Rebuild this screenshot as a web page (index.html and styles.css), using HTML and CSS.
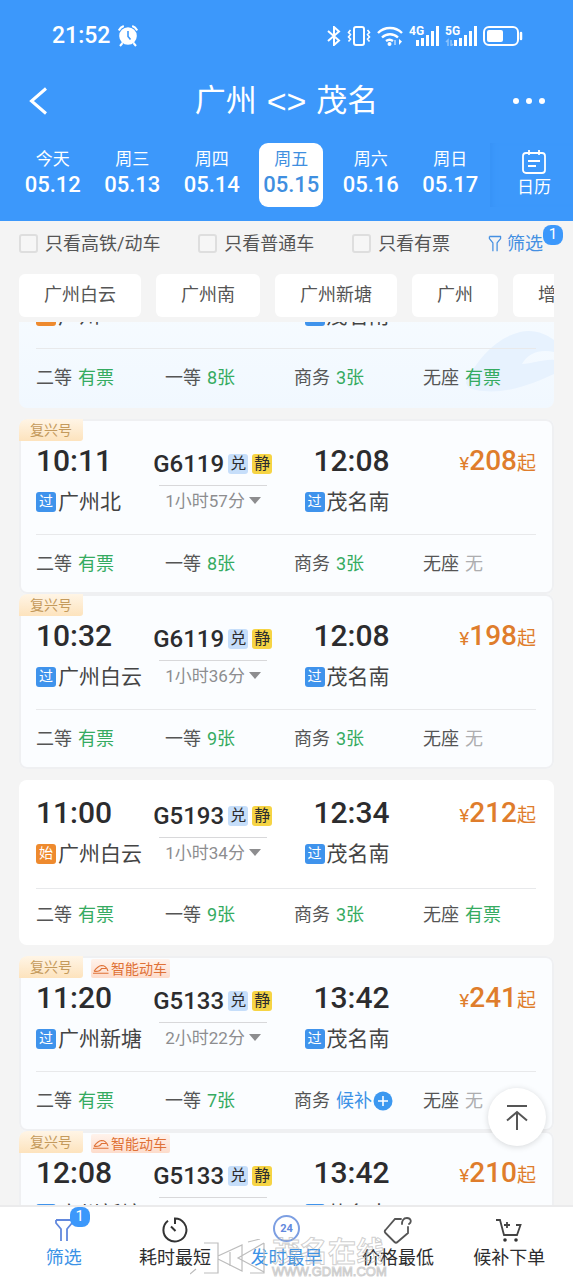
FILE: index.html
```html
<!DOCTYPE html>
<html lang="zh-CN">
<head>
<meta charset="utf-8">
<meta name="viewport" content="width=device-width, initial-scale=1">
<title>广州 - 茂名 车票</title>
<link rel="stylesheet" href="styles.css">
</head>
<body>
<svg class="defs" aria-hidden="true">
  <symbol id="funnel" viewBox="0 0 20 24"><path d="M2 2h16v3l-5 6v12M2 2v3l5 6v12" fill="none" stroke="currentColor" stroke-width="1.800" stroke-linejoin="round"/></symbol>
  <symbol id="caret" viewBox="0 0 12 8"><path d="M0 0h12L6 7z" fill="currentColor"/></symbol>
  <symbol id="train" viewBox="0 0 16 10"><path d="M0 9.300h15.500M1 7.300C3 4.500 5 2 8.500 1.500 12 1.500 14 4 15 7M1 7.300c4 .4 6.500-.3 7.500-2.800h4.500" fill="none" stroke="currentColor" stroke-width="1.100"/></symbol>
</svg>

<header class="top">
  <div class="status">
    <span class="clock">21:52</span>
    <svg width="20" height="22" viewBox="0 0 20 22"><circle cx="10" cy="11" r="8.800" fill="#fff"/><path d="M.8 5.500a9 9 0 0 1 5-4.500M19.200 5.500a9 9 0 0 0-5-4.500M4.500 18 2 21M15.500 18l2.500 3" stroke="#fff" stroke-width="2" fill="none"/><path d="M10 6v5.500l2.500 3" stroke="#3c98fb" stroke-width="1.600" fill="none"/></svg>
    <div class="signals">
      <svg width="14" height="20" viewBox="0 0 14 20"><path d="M1 5l11 9.500L7 19V1l5 4.500L1 15" fill="none" stroke="#fff" stroke-width="2"/></svg>
      <svg width="24" height="20" viewBox="0 0 24 20"><rect x="7" y="1" width="10" height="18" rx="2" fill="none" stroke="#fff" stroke-width="2"/><path d="M3.500 4 1.500 6.500l2 2-2 2.500 2 2-2 2.500M20.500 4l2 2.500-2 2 2 2.500-2 2 2 2.500" fill="none" stroke="#fff" stroke-width="1.600"/></svg>
      <svg width="26" height="20" viewBox="0 0 26 20"><path d="M1 7a17 17 0 0 1 24 0M5 11.500a11.500 11.500 0 0 1 16 0M9 15a6 6 0 0 1 7 0" fill="none" stroke="#fff" stroke-width="2.400"/><circle cx="12.500" cy="18" r="2" fill="#fff"/><path d="M18 14v5" stroke="#9bcafd" stroke-width="2"/><path d="M22 13v6l3-3.500" fill="#fff"/></svg>
      <span class="cell"><b>4G</b><svg width="24" height="20" viewBox="0 0 24 20"><path d="M2.500 14v6M7.500 12v8M12.500 9v11M17.500 5v15M22.500 0v20" stroke="#fff" stroke-width="3"/></svg></span>
      <span class="cell"><b>5G</b><svg width="32" height="20" viewBox="0 0 32 20"><path d="M1 16l2-2v6M8 18l-2 2v-6" stroke="#8cc3fd" stroke-width="1.500" fill="none"/><path d="M10.500 14v6M15.500 12v8M20.500 9v11M25.500 5v15M30.500 0v20" stroke="#fff" stroke-width="3"/></svg></span>
      <svg width="40" height="20" viewBox="0 0 40 20"><rect x="1" y="1" width="34" height="18" rx="5" fill="none" stroke="#fff" stroke-width="2"/><rect x="4" y="4" width="16" height="12" rx="2" fill="#fff"/><path d="M38 7v6" stroke="#fff" stroke-width="2.500" stroke-linecap="round"/></svg>
    </div>
  </div>
  <div class="titlebar">
    <button class="plain" aria-label="返回"><svg width="20" height="28" viewBox="0 0 20 28"><path d="M18 1.500 3.500 14 18 26.500" fill="none" stroke="#fff" stroke-width="3"/></svg></button>
    <h1><span>广州</span><span class="swap">&lt;&gt;</span><span>茂名</span></h1>
    <button class="plain" aria-label="更多"><svg width="34" height="8" viewBox="0 0 34 8"><g fill="#fff"><circle cx="5" cy="4" r="3"/><circle cx="18" cy="4" r="3"/><circle cx="31" cy="4" r="3"/></g></svg></button>
  </div>
  <div class="dates">
    <div class="days">
      <button class="day"><span>今天</span><b>05.12</b></button>
      <button class="day"><span>周三</span><b>05.13</b></button>
      <button class="day"><span>周四</span><b>05.14</b></button>
      <button class="day on"><span>周五</span><b>05.15</b></button>
      <button class="day"><span>周六</span><b>05.16</b></button>
      <button class="day"><span>周日</span><b>05.17</b></button>
    </div>
    <button class="calendar">
      <svg width="24" height="24" viewBox="0 0 24 24"><rect x="1" y="3" width="22" height="20" rx="3" fill="none" stroke="#fff" stroke-width="1.800"/><path d="M7 0v5M17 0v5M6 11h12M6 16h8" stroke="#fff" stroke-width="1.800"/></svg>
      <span>日历</span>
    </button>
  </div>
</header>

<section class="filters">
  <label class="check"><input type="checkbox">只看高铁/动车</label>
  <label class="check"><input type="checkbox">只看普通车</label>
  <label class="check"><input type="checkbox">只看有票</label>
  <button class="plain filter"><svg width="14" height="17"><use href="#funnel"/></svg>筛选<i class="count">1</i></button>
</section>
<nav class="chips">
  <button>广州白云</button><button>广州南</button><button>广州新塘</button><button>广州</button><button>增城</button>
</nav>

<main class="list">
  <article class="card rail first">
    <svg class="bullet" width="88" height="64" viewBox="0 0 88 64"><path d="M0 52C12 28 30 8 54 2c14-3 26 2 34 8v12c-14-3-26 1-32 12 10 0 22-5 32-4v14C70 52 40 66 10 60 4 59 0 56 0 52z" fill="#e7f2fe"/></svg>
    <div class="trip">
      <div class="stop"><time>09:56</time><p><i class="mark start">始</i>广州</p></div>
      <div class="run"><p class="no">G6117</p></div>
      <div class="last"><div class="stop end"><time>12:02</time><p><i class="mark">过</i>茂名南</p></div></div>
    </div>
    <ul class="seats"><li>二等 <em>有票</em></li><li>一等 <em>8张</em></li><li>商务 <em>3张</em></li><li>无座 <em>有票</em></li></ul>
  </article>

  <article class="card rail">
    <div class="tags"><span class="fx">复兴号</span></div>
    <div class="trip">
      <div class="stop"><time>10:11</time><p><i class="mark">过</i>广州北</p></div>
      <div class="run"><p class="no">G6119<i class="ex">兑</i><i class="quiet">静</i></p><hr><button class="dur">1小时57分<svg width="12" height="8"><use href="#caret"/></svg></button></div>
      <div class="last"><div class="stop end"><time>12:08</time><p><i class="mark">过</i>茂名南</p></div><p class="price"><small>¥</small>208<small>起</small></p></div>
    </div>
    <ul class="seats"><li>二等 <em>有票</em></li><li>一等 <em>8张</em></li><li>商务 <em>3张</em></li><li>无座 <em class="none">无</em></li></ul>
  </article>

  <article class="card rail">
    <div class="tags"><span class="fx">复兴号</span></div>
    <div class="trip">
      <div class="stop"><time>10:32</time><p><i class="mark">过</i>广州白云</p></div>
      <div class="run"><p class="no">G6119<i class="ex">兑</i><i class="quiet">静</i></p><hr><button class="dur">1小时36分<svg width="12" height="8"><use href="#caret"/></svg></button></div>
      <div class="last"><div class="stop end"><time>12:08</time><p><i class="mark">过</i>茂名南</p></div><p class="price"><small>¥</small>198<small>起</small></p></div>
    </div>
    <ul class="seats"><li>二等 <em>有票</em></li><li>一等 <em>9张</em></li><li>商务 <em>3张</em></li><li>无座 <em class="none">无</em></li></ul>
  </article>

  <article class="card">
    <div class="trip">
      <div class="stop"><time>11:00</time><p><i class="mark start">始</i>广州白云</p></div>
      <div class="run"><p class="no">G5193<i class="ex">兑</i><i class="quiet">静</i></p><hr><button class="dur">1小时34分<svg width="12" height="8"><use href="#caret"/></svg></button></div>
      <div class="last"><div class="stop end"><time>12:34</time><p><i class="mark">过</i>茂名南</p></div><p class="price"><small>¥</small>212<small>起</small></p></div>
    </div>
    <ul class="seats"><li>二等 <em>有票</em></li><li>一等 <em>9张</em></li><li>商务 <em>3张</em></li><li>无座 <em>有票</em></li></ul>
  </article>

  <article class="card rail">
    <div class="tags"><span class="fx">复兴号</span><span class="smart"><svg width="16" height="10"><use href="#train"/></svg>智能动车</span></div>
    <div class="trip">
      <div class="stop"><time>11:20</time><p><i class="mark">过</i>广州新塘</p></div>
      <div class="run"><p class="no">G5133<i class="ex">兑</i><i class="quiet">静</i></p><hr><button class="dur">2小时22分<svg width="12" height="8"><use href="#caret"/></svg></button></div>
      <div class="last"><div class="stop end"><time>13:42</time><p><i class="mark">过</i>茂名南</p></div><p class="price"><small>¥</small>241<small>起</small></p></div>
    </div>
    <ul class="seats"><li>二等 <em>有票</em></li><li>一等 <em>7张</em></li><li>商务 <em class="wait">候补</em><svg width="20" height="20" viewBox="0 0 20 20"><circle cx="10" cy="10" r="9.500" fill="#3c98f0"/><path d="M10 5v10M5 10h10" stroke="#fff" stroke-width="1.600"/></svg></li><li>无座 <em class="none">无</em></li></ul>
  </article>

  <article class="card rail">
    <div class="tags"><span class="fx">复兴号</span><span class="smart"><svg width="16" height="10"><use href="#train"/></svg>智能动车</span></div>
    <div class="trip">
      <div class="stop"><time>12:08</time><p><i class="mark">过</i>广州新塘</p></div>
      <div class="run"><p class="no">G5133<i class="ex">兑</i><i class="quiet">静</i></p><hr></div>
      <div class="last"><div class="stop end"><time>13:42</time><p><i class="mark">过</i>茂名南</p></div><p class="price"><small>¥</small>210<small>起</small></p></div>
    </div>
  </article>
  <button class="totop" aria-label="回到顶部"><svg width="24" height="26" viewBox="0 0 24 26"><path d="M2 2h20M12 26V8M2 16.500 12 8l10 8.500" fill="none" stroke="#555" stroke-width="2"/></svg></button>
</main>

<footer class="tabs">
  <button class="on"><span class="ic"><svg width="20" height="24"><use href="#funnel"/></svg><i class="count">1</i></span>筛选</button>
  <button><span class="ic"><svg width="26" height="26" viewBox="0 0 26 26"><path d="M13 7V1.500A11.500 11.500 0 1 1 6 3.800M9 9.500l4.500 4.500" fill="none" stroke="#333" stroke-width="2"/></svg></span>耗时最短</button>
  <button class="on"><span class="ic ring">24</span>发时最早</button>
  <button><span class="ic"><svg width="30" height="30" viewBox="0 0 30 30"><path d="M18 4h-6L2.500 15c-1 1-1 2 0 3l9 9c1 1 2 1 3 0L25 18v-6M19 9c0-3 1-6 5-6 4 0 5 4 2 6" fill="none" stroke="#555" stroke-width="1.800" stroke-linecap="round"/></svg></span>价格最低</button>
  <button><span class="ic"><svg width="26" height="24" viewBox="0 0 26 24"><path d="M0 2h4l4 15h13l3.500-10H20M8 7h6M11 4v6" fill="none" stroke="#444" stroke-width="1.800"/><circle cx="9" cy="22" r="1.800" fill="#333"/><circle cx="20" cy="22" r="1.800" fill="#333"/></svg></span>候补下单</button>
  <div class="wm">
    <svg width="80" height="40" viewBox="0 0 80 40"><path d="M0 35l6-5M14 4h14v30H14M28 17 52 6v26L28 20M40 13v14M74 4v30H60M74 4 48 19l26 14M58 3l12-3" fill="none" stroke="#bdbdbd" stroke-width="1.200"/></svg>
    <div><b>茂名在线</b><span>WWW.GDMM.COM</span></div>
  </div>
</footer>
</body>
</html>
```
FILE: styles.css
```css
* { box-sizing: border-box; margin: 0; padding: 0; }
body {
  display: flex; flex-direction: column; height: 100vh; overflow: hidden;
  background: #f4f4f4; color: #555;
  font: 18px/28px Roboto, "Noto Sans CJK SC", sans-serif;
}
button { font: inherit; color: inherit; border: 0; background: none; white-space: nowrap; }
i, em { font-style: normal; }
svg { display: block; flex: none; }
.defs { position: absolute; width: 0; height: 0; }
.plain { display: flex; align-items: center; }

.top { background: #3c98fb; color: #fff; padding-bottom: 14px; }
.status { display: flex; align-items: center; gap: 8px; height: 72px; padding: 0 50px 0 52px; }
.clock { font-size: 23px; font-weight: 500; }
.signals { display: flex; align-items: center; gap: 6px; margin-left: auto; }
.cell { display: flex; justify-content: flex-end; position: relative; width: 32px; }
.cell b { position: absolute; left: 0; top: -1px; font-size: 12px; line-height: 12px; font-weight: 700; }
.cell:nth-of-type(1) { width: 30px; }
.titlebar { display: flex; align-items: center; justify-content: space-between; height: 58px; padding: 0 28px; margin-bottom: 13px; }
.titlebar button { width: 34px; }
h1 { display: flex; gap: 10px; font-size: 31px; line-height: 44px; font-weight: 400; }
.swap { font-family: "Liberation Sans", sans-serif; font-size: 34px; }
.dates { display: flex; }
.days { flex: 1; display: grid; grid-template-columns: repeat(6, 1fr); justify-items: center; padding: 0 0 0 13px; }
.day { display: flex; flex-direction: column; align-items: center; width: 64px; height: 64px; padding-top: 5px; border-radius: 9px; font-size: 17px; line-height: 23px; }
.day b { font-size: 22px; line-height: 28px; font-weight: 500; }
.day.on { background: #fff; color: #3f8fe0; }
.calendar { display: flex; flex-direction: column; align-items: center; gap: 2px; width: 83px; padding: 7px 0 0 5px; font-size: 17px; line-height: 22px; box-shadow: inset 6px 0 6px -5px #3690f4; }

.filters { display: flex; align-items: center; justify-content: space-between; height: 45px; padding: 0 30px 0 19px; }
.check { display: flex; align-items: center; gap: 7px; white-space: nowrap; }
.check input { appearance: none; width: 19px; height: 19px; border: 2px solid #dedede; border-radius: 3px; background: #f6f6f6; }
.filter { gap: 5px; color: #4590e2; position: relative; }
.count { position: absolute; width: 20px; height: 20px; border-radius: 8px; background: #3c98fb; color: #fff; font-size: 15px; line-height: 19px; text-align: center; }
.filter .count { right: -20px; top: -5px; }
.chips { display: flex; gap: 15px; margin: 8px 19px 5px; overflow: hidden; flex: none; }
.chips button { flex: none; height: 43px; padding: 0 25px 2px; border-radius: 6px; background: #fff; }

.list { position: relative; flex: 1; min-height: 0; overflow: hidden; padding: 0 19px; }
.card { position: relative; margin-top: 11px; padding: 15px 0 16px; border-radius: 8px; background: #fff; overflow: hidden; }
.rail { padding: 0 0 16px; background: #fbfdff; box-shadow: inset 0 0 0 2px #eff0f2; }
.rail + .rail { margin-top: 0; }
.first + .rail { margin-top: 11px; }
/* the list is scrolled part of the way into its first card */
.rail.first { margin-top: -89px; padding-top: 24px; background: linear-gradient(#fafdff, #f1f8ff); box-shadow: none; }
.bullet { position: absolute; right: 0; bottom: 14px; }
.tags { display: flex; gap: 8px; height: 24px; font-size: 14px; }
.fx { height: 22px; padding: 0 11px; line-height: 22px; color: #c49a5c; background: linear-gradient(#fff5e6, #fde3bd); border-radius: 8px 0 3px 0; }
.smart { display: flex; align-items: center; gap: 2px; height: 19px; margin-top: 3px; padding: 0 3px 0 2px; line-height: 18px; color: #df7136; background: linear-gradient(#fff3ec, #fddccb); border-radius: 2px; }
.trip { position: relative; display: grid; grid-template-columns: 117fr 151fr 231fr; margin: 0 18px 20px 17px; }
.rail .trip { margin-bottom: 17px; }
.stop { display: flex; flex-direction: column; gap: 8px; }
.end { text-align: right; }
.card:not(.rail) .trip { margin-bottom: 19px; }
time { font-size: 30px; line-height: 36px; font-weight: 500; color: #2c2c2e; }
.stop p { display: flex; align-items: center; gap: 2px; font-size: 21px; line-height: 30px; color: #444; white-space: nowrap; }
.mark { width: 20px; height: 20px; border-radius: 3px; background: #3f93ec; color: #fff; font-size: 14px; line-height: 19px; text-align: center; }
.mark.start { background: #ee8a2e; }
.run { padding-top: 7px; }
.no { display: flex; align-items: center; font-size: 24px; line-height: 28px; font-weight: 500; color: #2c2c2e; }
.no i { width: 20px; height: 20px; margin-left: 4px; border-radius: 3px; font-size: 16px; line-height: 19px; font-weight: 400; text-align: center; }
.ex { background: #c6defa; }
.quiet { background: #f6d444; }
.run hr { width: 108px; height: 1px; margin: 7px 0 3px 6px; border: 0; background: #d8d8da; }
.dur { display: flex; align-items: center; gap: 4px; padding-left: 12px; font-size: 17px; line-height: 24px; color: #8d8d8f; }
.last { display: flex; justify-content: space-between; align-items: flex-start; }
.price { font-size: 28px; line-height: 36px; font-weight: 500; color: #df7d2c; white-space: nowrap; }
.price small { font-size: 19px; font-weight: 400; }
.seats { position: relative; display: grid; grid-template-columns: repeat(4, 1fr); list-style: none; margin-left: 17px; padding: 13px 2px 0 0; }
.rail .seats { padding-top: 16px; }
.seats::before { content: ""; position: absolute; top: 0; left: 0; right: 18px; height: 1px; background: #e8e9eb; }
.seats li { display: flex; align-items: center; white-space: nowrap; }
.seats em { margin-left: 6px; color: #35ab61; }
.seats .none { color: #adadaf; }
.seats .wait { color: #3c92e6; margin-right: 1px; }
.totop { position: absolute; right: 27px; bottom: 59px; display: grid; place-items: center; width: 58px; height: 58px; border-radius: 50%; background: #fff; box-shadow: 0 1px 6px rgba(0, 0, 0, .15); }

.tabs { position: relative; display: grid; grid-template-columns: repeat(5, 1fr); height: 75px; padding: 0 8px; background: #fff; border-top: 2px solid #ebebec; color: #2c2c2e; }
.tabs button { display: flex; flex-direction: column; align-items: center; padding-top: 7px; line-height: 26px; }
.tabs .on { color: #3c92e6; }
.tabs .ic { position: relative; display: grid; place-items: center; height: 31px; color: #6288dd; }
.tabs .count { left: 16px; top: -7px; }
.tabs .ring { width: 27px; height: 27px; margin: 1px 0 3px; border: 2px solid #7d9fe2; border-radius: 50%; font-size: 11px; line-height: 23px; font-weight: 700; }
.wm { position: absolute; left: 190px; bottom: 1px; display: flex; align-items: flex-end; gap: 2px; color: transparent; -webkit-text-stroke: 1px rgba(175, 175, 175, .6); pointer-events: none; }
.wm b { display: block; font-size: 28px; line-height: 24px; font-weight: 700; }
.wm span { display: block; font: 13px/14px "Liberation Sans", sans-serif; }
```
